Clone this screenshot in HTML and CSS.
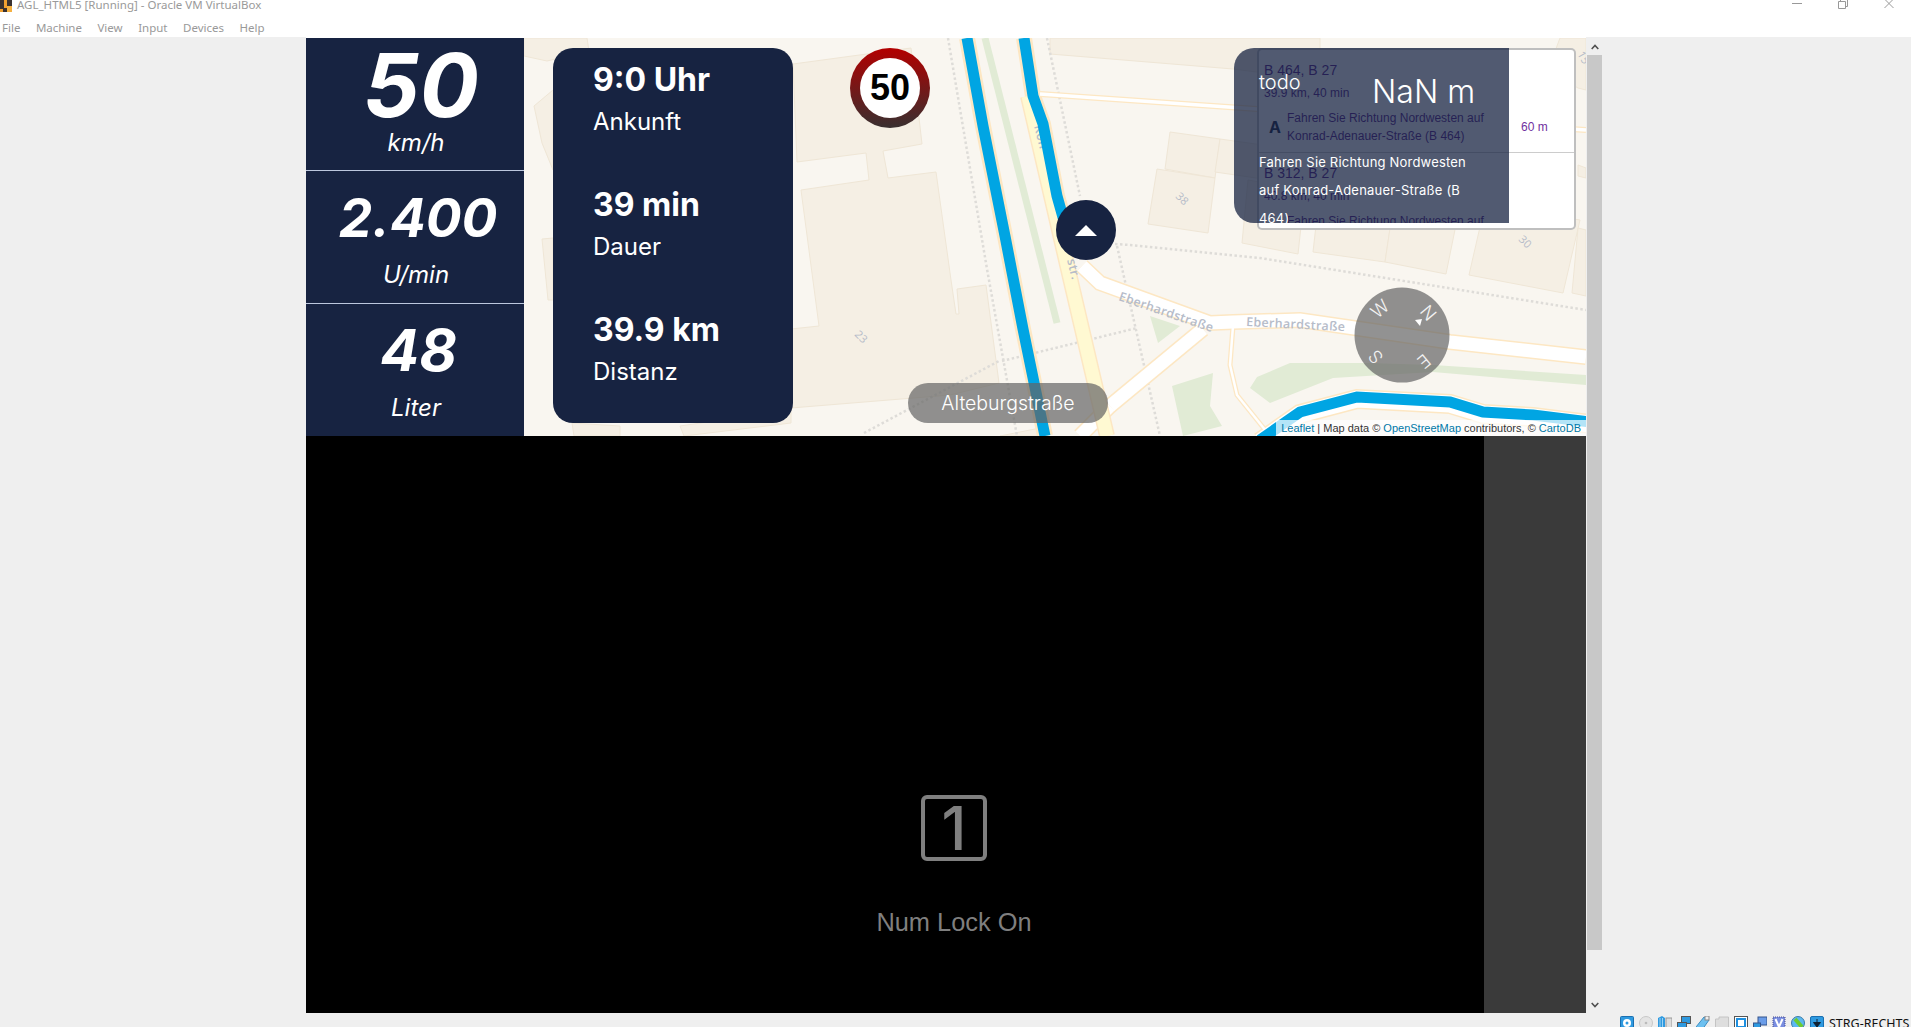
FILE: index.html
```html
<!DOCTYPE html>
<html lang="de">
<head>
<meta charset="utf-8">
<title>AGL_HTML5 [Running] - Oracle VM VirtualBox</title>
<link rel="stylesheet" href="styles.css">
</head>
<body>
<header class="chrome">
  <div class="titlebar">
    <svg class="app-icon" viewBox="0 0 12 12"><rect x="0" y="0" width="12" height="12" fill="#3a3230"/><rect x="4" y="0" width="3" height="8" fill="#f0a030"/><rect x="7" y="6" width="5" height="6" fill="#f5b040"/><rect x="0" y="9" width="3" height="3" fill="#f0a030"/></svg>
    <span class="window-title">AGL_HTML5 [Running] - Oracle VM VirtualBox</span>
    <div class="window-controls">
      <svg class="win-icon" viewBox="0 0 10 10"><path d="M0 4.5H10" stroke="#999" fill="none"/></svg>
      <svg class="win-icon" viewBox="0 0 10 10"><path d="M.5 2.5H7.5V9.5H.5ZM2.5 2.5V.5H9.5V7.5H7.5" stroke="#999" fill="none"/></svg>
      <svg class="win-icon" viewBox="0 0 10 10"><path d="M.5 0L9.5 9M9.5 0L.5 9" stroke="#999" fill="none"/></svg>
    </div>
  </div>
  <nav class="menubar">
    <span class="menu-item">File</span><span class="menu-item">Machine</span><span class="menu-item">View</span><span class="menu-item">Input</span><span class="menu-item">Devices</span><span class="menu-item">Help</span>
  </nav>
</header>

<div class="workspace">
  <main class="vm">
    <section class="top-row">
      <aside class="stats">
        <div class="stat stat-speed"><div class="stat-value">50</div><div class="stat-unit">km/h</div></div>
        <div class="stat stat-rpm"><div class="stat-value">2.400</div><div class="stat-unit">U/min</div></div>
        <div class="stat stat-fuel"><div class="stat-value">48</div><div class="stat-unit">Liter</div></div>
      </aside>

      <div class="map">
        <svg class="map-canvas" viewBox="524 38 1062 398" preserveAspectRatio="none">
          <g class="building">
            <polygon points="801,190 869,180 866,153 797,162 793,64 911,48 922,144 883,151 888,178 936,172 951,280 956,314 959,314 957,289 986,285 999,383 950,395 791,408 791,329 819,326"/>
            <polygon points="524,38 587,38 589,51 547,61 524,56"/>
            <polygon points="534,106 553,90 553,170 542,143"/>
            <polygon points="542,239 553,238 553,300 548,300"/>
            <polygon points="572,423 620,426 620,436 574,436"/>
            <polygon points="680,426 791,410 791,423 684,436"/>
            <polygon points="1050,38 1050,54 1233,69 1320,80 1320,38"/>
            <polygon points="1170,132 1220,139 1215,178 1165,169"/>
            <polygon points="1220,139 1270,146 1270,180 1215,172"/>
            <polygon points="1157,169 1215,178 1208,233 1148,224"/>
            <polygon points="1248,180 1305,190 1298,254 1242,243"/>
            <polygon points="1320,190 1395,195 1385,262 1313,252"/>
            <polygon points="1395,195 1460,205 1446,274 1385,262"/>
            <polygon points="1485,205 1580,220 1563,293 1469,275"/>
            <polygon points="1578,228 1586,230 1586,296 1572,293"/>
            <polygon points="1560,38 1586,38 1586,90 1578,88 1548,70"/>
            <polygon points="1578,165 1586,168 1586,178 1578,176"/>
            <polygon points="1000,436 1040,428 1042,436"/>
          </g>
          <g class="park">
            <polygon points="1250,388 1257,377 1290,363 1367,363 1433,365 1586,375 1586,385 1433,372 1333,378 1270,403"/>
            <polygon points="1150,316 1180,326 1158,343"/>
            <polygon points="1172,386 1213,373 1210,406 1222,426 1183,436"/>
          </g>
          <path class="green-strip" d="M985 38L1057 323"/>
          <g class="paths">
            <path d="M948 38L987 269L1017 436"/>
            <path d="M1047 38L1080 196"/>
            <path d="M1115 244L1130 245L1260 258L1586 310"/>
            <path d="M1117 246L1160 436"/>
            <path d="M1002 361L1137 328"/>
            <path d="M864 433L999 361"/>
          </g>
          <g class="road-casing">
            <path class="w16" d="M1082 266L1100 283L1210 323L1233 322L1300 320L1450 342L1586 357"/>
            <path class="w16" d="M1110 406L1203 329"/>
            <path class="w16" d="M1080 436L1110 406"/>
            <path class="w7" d="M1040 94L1257 109L1586 130"/>
            <path class="w6" d="M1233 326L1230 365L1237 395L1270 436"/>
            <path class="w16" d="M967 38L983 126L1005 236L1023 329L1045 436"/>
            <path class="w16" d="M1024 38L1033 96L1043 124L1057 196L1066 228"/>
            <path class="w20" d="M1260 442L1300 414L1357 399L1450 404L1483 414L1533 417L1590 424"/>
          </g>
          <g class="road-white">
            <path class="w14" d="M1082 266L1100 283L1210 323L1233 322L1300 320L1450 342L1586 357"/>
            <path class="w14" d="M1110 406L1203 329"/>
            <path class="w14" d="M1080 436L1110 406"/>
            <path class="w4" d="M1040 94L1257 109L1586 130"/>
            <path class="w3" d="M1233 326L1230 365L1237 395L1270 436"/>
            <path class="w17" d="M1260 442L1300 414L1357 399L1450 404L1483 414L1533 417L1590 424"/>
          </g>
          <path class="road-major-casing" d="M1028 96L1068 269L1107 436"/>
          <path class="road-major" d="M1028 96L1068 269L1107 436"/>
          <g class="map-labels">
            <text transform="translate(1118 300) rotate(19)">Eberhardstraße</text>
            <text transform="translate(1246 326) rotate(3)">Eberhardstraße</text>
            <text transform="translate(1034 126) rotate(76)">Kon</text>
            <text transform="translate(1067 260) rotate(76)">str.</text>
          </g>
          <g class="route">
            <path d="M967 38L983 126L1005 236L1023 329L1045 436"/>
            <path d="M1024 38L1033 96L1043 124L1057 196L1066 228"/>
            <path d="M1260 440L1300 412L1357 397L1450 402L1483 412L1533 415L1590 422"/>
          </g>
          <g class="map-numbers">
            <text transform="translate(854 335) rotate(45)">23</text>
            <text transform="translate(1175 197) rotate(45)">38</text>
            <text transform="translate(1518 240) rotate(45)">30</text>
            <text transform="translate(1577 54) rotate(60)">15</text>
          </g>
        </svg>

        <div class="trip-card">
          <div class="trip-item"><div class="trip-value">9:0 Uhr</div><div class="trip-label">Ankunft</div></div>
          <div class="trip-item"><div class="trip-value">39 min</div><div class="trip-label">Dauer</div></div>
          <div class="trip-item"><div class="trip-value">39.9 km</div><div class="trip-label">Distanz</div></div>
        </div>

        <div class="speed-sign"><div class="speed-sign-face">50</div></div>

        <div class="car-marker"><svg class="car-arrow" viewBox="0 0 22 12"><path d="M11 0L22 11H0Z" fill="#fff"/></svg></div>

        <div class="street-pill">Alteburgstraße</div>

        <div class="routing-box">
          <div class="routing-list">
            <div class="alt">
              <div class="alt-title">B 464, B 27</div>
              <div class="alt-sub">39.9 km, 40 min</div>
              <div class="alt-row"><span class="alt-icon">A</span><span class="alt-text">Fahren Sie Richtung Nordwesten auf<br>Konrad-Adenauer-Straße (B 464)</span><span class="alt-dist">60 m</span></div>
            </div>
            <div class="alt">
              <div class="alt-title">B 312, B 27</div>
              <div class="alt-sub">40.8 km, 40 min</div>
              <div class="alt-row"><span class="alt-icon"></span><span class="alt-text">Fahren Sie Richtung Nordwesten auf</span></div>
            </div>
          </div>
        </div>

        <div class="turn-card">
          <div class="turn-head"><span class="turn-todo">todo</span><span class="turn-dist">NaN m</span></div>
          <div class="turn-text">Fahren Sie Richtung Nordwesten auf Konrad-Adenauer-Straße (B 464)</div>
        </div>

        <svg class="compass" viewBox="0 0 96 96">
          <circle class="compass-disc" cx="48" cy="48" r="47.5"/>
          <g transform="rotate(50 48 48)">
            <g class="compass-letters">
              <text x="48" y="20">N</text>
              <text x="48" y="20" transform="rotate(90 48 48)">E</text>
              <text x="48" y="20" transform="rotate(180 48 48)">S</text>
              <text x="48" y="20" transform="rotate(270 48 48)">W</text>
            </g>
          </g>
          <polygon class="compass-needle" points="61,33 68,32 66,39"/>
        </svg>

        <div class="attribution"><a class="attr-link">Leaflet</a> | Map data © <a class="attr-link">OpenStreetMap</a> contributors, © <a class="attr-link">CartoDB</a></div>
      </div>
    </section>

    <section class="bottom-row">
      <div class="keyboard-view">
        <div class="numlock-icon">1</div>
        <div class="numlock-label">Num Lock On</div>
      </div>
      <div class="side-panel"></div>
    </section>
  </main>

  <div class="scrollbar">
    <svg class="scroll-arrow" viewBox="0 0 8 6"><path d="M.7 5L4 1.5L7.3 5" stroke="#505050" stroke-width="1.6" fill="none"/></svg>
    <div class="scroll-thumb"></div>
    <svg class="scroll-arrow scroll-arrow-down" viewBox="0 0 8 6"><path d="M.7 1L4 4.5L7.3 1" stroke="#505050" stroke-width="1.6" fill="none"/></svg>
  </div>
</div>

<footer class="statusbar">
  <svg class="st-icon" viewBox="0 0 14 14"><rect x=".5" y=".5" width="13" height="13" rx="1" fill="#2f9ae0" stroke="#1a6fb0"/><circle cx="7" cy="7" r="4" fill="#fff"/><circle cx="7" cy="7" r="1.5" fill="#2f9ae0"/></svg>
  <svg class="st-icon" viewBox="0 0 14 14"><circle cx="7" cy="7" r="6.5" fill="#e4e4e4" stroke="#c8c8c8"/><circle cx="7" cy="7" r="1.3" fill="#bbb"/></svg>
  <svg class="st-icon" viewBox="0 0 14 14"><path d="M0 2L4 0L7 2V14H0Z" fill="#2f9ae0"/><path d="M2 2V13M4.500 2V13" stroke="#9bd3f5"/><rect x="8" y="2" width="6" height="10" fill="#ddd" stroke="#999"/></svg>
  <svg class="st-icon" viewBox="0 0 14 14"><rect x="4.500" y=".5" width="9" height="7" fill="#2f9ae0" stroke="#555"/><rect x=".5" y="6.500" width="9" height="7" fill="#2f9ae0" stroke="#555"/></svg>
  <svg class="st-icon" viewBox="0 0 14 14"><path d="M0 11L8 1L13 4L6 14H2Z" fill="#6cc0f0" stroke="#3c8cc0"/><rect x="9" y="0" width="4" height="4" fill="#eee" stroke="#888"/></svg>
  <svg class="st-icon" viewBox="0 0 14 14"><path d="M.5 3H4V1H13.500V13.500H.5Z" fill="#dedede" stroke="#c4c4c4"/></svg>
  <svg class="st-icon" viewBox="0 0 14 14"><rect x=".5" y=".5" width="13" height="13" fill="#fff" stroke="#555"/><rect x="2" y="2" width="10" height="10" fill="#1e90e0"/><rect x="4" y="4" width="6" height="6" fill="#fff"/></svg>
  <svg class="st-icon" viewBox="0 0 14 14"><rect x="5" y="1" width="9" height="8" fill="#6a9ce8" stroke="#34558c"/><rect x=".5" y="7" width="7" height="7" fill="#2f9ae0" stroke="#34558c"/></svg>
  <svg class="st-icon" viewBox="0 0 14 14"><rect x="1" y="1" width="12" height="12" fill="#7a8ee0" stroke="#4a4f90" stroke-dasharray="1 1"/><path d="M3.500 3L7 11L10.500 3" stroke="#fff" stroke-width="2" fill="none"/></svg>
  <svg class="st-icon" viewBox="0 0 14 14"><circle cx="7" cy="7" r="6.500" fill="#5cb8f0" stroke="#3c7ca8"/><path d="M4 3L11 11" stroke="#6dcc30" stroke-width="4"/></svg>
  <svg class="st-icon" viewBox="0 0 14 14"><rect x=".5" y=".5" width="13" height="13" rx="1.500" fill="#2f9ae0" stroke="#1a6fb0"/><path d="M7 3V7M3.500 6.500H10.500L7 11Z" stroke="#123" fill="#123"/></svg>
  <span class="host-key">STRG-RECHTS</span>
</footer>
</body>
</html>
```

FILE: styles.css
```css
* { box-sizing: border-box; }
html, body { margin: 0; height: 1027px; overflow: hidden; }
body {
  width: 1911px;
  background: #efefef;
  font-family: "Inter", "Liberation Sans", sans-serif;
  display: flex;
  flex-direction: column;
}

/* window chrome */
.chrome { height: 37px; background: #fff; flex: none; overflow: hidden; }
.titlebar { height: 18px; display: flex; align-items: flex-start; position: relative; }
.app-icon { width: 12px; height: 12px; flex: none; display: block; }
.window-title { margin-left: 5px; margin-top: -3px; font: 11.5px/16px "Noto Sans", sans-serif; color: #9a9a9a; }
.window-controls { margin-left: auto; display: flex; gap: 36px; padding-right: 17px; align-items: flex-start; }
.win-icon { width: 10px; height: 10px; display: block; margin-top: -1px; }
.menubar { height: 19px; display: flex; padding-left: 2px; font: 11.5px/20px "Noto Sans", sans-serif; color: #999; }
.menu-item { margin-right: 15.5px; }

/* workspace */
.workspace { height: 976px; flex: none; display: flex; padding-left: 306px; }
.vm { width: 1280px; height: 976px; display: flex; flex-direction: column; background: #fff; padding-top: 1px; }
.top-row { height: 398px; display: flex; flex: none; }

/* stats */
.stats { width: 218px; flex: none; background: #172341; color: #fff; display: flex; flex-direction: column; }
.stat { display: flex; flex-direction: column; align-items: center; height: 133px; border-bottom: 1px solid #bcc7de; font-style: italic; }
.stat-fuel { height: 132px; border-bottom: 0; }
.stat-value { font-weight: 700; }
.stat-unit { font-size: 24px; line-height: 30px; padding-left: 2px; }
.stat-speed .stat-value { font-size: 88px; line-height: 88px; margin-top: 3px; margin-bottom: -1px; padding-left: 12px; }
.stat-rpm .stat-value { font-size: 53px; line-height: 53px; margin-top: 20.500px; margin-bottom: 15.500px; padding-left: 6px; }
.stat-fuel .stat-value { font-size: 58px; line-height: 58px; margin-top: 17px; margin-bottom: 14px; padding-left: 7px; }

/* map */
.map { flex: 1; position: relative; overflow: hidden; background: #f9f6f0; }
.map-canvas { display: block; width: 100%; height: 100%; }
.building polygon { fill: #f5efe4; stroke: #efe6d6; stroke-width: 1; }
.park polygon { fill: #e1ebd5; }
.green-strip { fill: none; stroke: #e1ebd5; stroke-width: 7; }
.paths path { fill: none; stroke: #dedcd8; stroke-width: 2.500; stroke-dasharray: 2.500 2.500; }
.road-casing path { fill: none; stroke: #fde7c3; }
.road-white path { fill: none; stroke: #fff; }
.w20 { stroke-width: 20; }
.w17 { stroke-width: 17; }
.w16 { stroke-width: 16; }
.w14 { stroke-width: 13; }
.w7 { stroke-width: 6; }
.w6 { stroke-width: 5; }
.w4 { stroke-width: 3.5; }
.w3 { stroke-width: 2.5; }
.road-major-casing { fill: none; stroke: #fde7c3; stroke-width: 16; }
.road-major { fill: none; stroke: #fff9d2; stroke-width: 13; }
.route path { fill: none; stroke: #00a5e3; stroke-width: 11; }
.map-labels text { font: 600 12.500px "Open Sans", sans-serif; letter-spacing: .3px; fill: #b6bcc9; }
.map-numbers text { font: 11px "Open Sans", sans-serif; fill: #b6bcc9; }

/* overlays */
.trip-card { position: absolute; left: 29px; top: 9.500px; width: 240px; height: 375px; border-radius: 20px; background: #172341; color: #fff; padding: 12px 0 0 40px; display: flex; flex-direction: column; gap: 41px; }
.trip-value { font-size: 32px; line-height: 40px; font-weight: 700; }
.trip-label { font-size: 24px; line-height: 44px; }

.speed-sign { position: absolute; left: 326px; top: 10px; width: 80px; height: 80px; border-radius: 50%; background: linear-gradient(#b30000, #383030); display: flex; align-items: center; justify-content: center; }
.speed-sign-face { width: 60px; height: 60px; border-radius: 50%; background: #fff; color: #000; font: 700 36px/60px "Liberation Sans", sans-serif; text-align: center; }

.car-marker { position: absolute; left: 532px; top: 162px; width: 60px; height: 60px; border-radius: 50%; background: #172341; display: flex; align-items: center; justify-content: center; }
.car-arrow { width: 22px; height: 12px; display: block; margin-top: 1px; }

.street-pill { position: absolute; left: 384px; top: 345px; width: 200px; height: 40px; border-radius: 20px; background: rgba(100, 100, 100, .7); color: #fff; font-size: 19.500px; font-weight: 300; line-height: 41px; text-align: center; }

.routing-box { position: absolute; left: 733px; top: 10px; width: 319px; height: 182px; background: #fff; border: 2px solid rgba(0, 0, 0, .25); border-radius: 5px; font-family: "Liberation Sans", sans-serif; color: #551a8b; }
.routing-list { height: 173px; overflow: hidden; }
.alt { padding-left: 5px; padding-top: 10px; height: 103px; border-bottom: 1px solid #ccc; }
.alt + .alt { border-bottom: 0; }
.alt-title { font-size: 14px; line-height: 20px; }
.alt-sub { font-size: 12px; line-height: 26px; }
.alt-row { display: flex; align-items: center; margin-top: 3px; font-size: 12px; line-height: 18px; }
.alt-icon { width: 23px; flex: none; padding-left: 5px; font: 700 16px "Inter", sans-serif; color: #172341; }
.alt-text { width: 234px; flex: none; }
.alt-dist { color: #7030a0; }

.turn-card { position: absolute; left: 710px; top: 10px; width: 275px; height: 175px; border-radius: 20px 0 0 20px; background: rgba(23, 35, 65, .75); color: #fff; padding-left: 25px; overflow: hidden; }
.turn-head { display: flex; align-items: flex-start; padding-top: 19px; height: 100px; font-weight: 300; }
.turn-todo { font-size: 20px; line-height: 30px; width: 113px; }
.turn-dist { font-size: 32px; line-height: 50px; }
.turn-text { font-size: 13px; letter-spacing: .2px; line-height: 28px; width: 224px; }

.compass { position: absolute; left: 830px; top: 249px; width: 96px; height: 96px; display: block; }
.compass-disc { fill: rgba(100, 100, 100, .7); }
.compass-letters text { font: 300 18px "Inter", sans-serif; fill: #f2f2f2; text-anchor: middle; }
.compass-needle { fill: #fff; }

.attribution { position: absolute; right: 0; bottom: 0; height: 16px; padding: 0 5px; background: rgba(255, 255, 255, .7); font: 11px/16px "Liberation Sans", sans-serif; color: #333; white-space: nowrap; }
.attr-link { color: #0078a8; }

/* lower part */
.bottom-row { flex: 1; display: flex; min-height: 0; }
.keyboard-view { width: 1178px; background: #000; color: #7f7f7f; display: flex; flex-direction: column; align-items: center; padding: 359px 0 0 118px; }
.numlock-icon { width: 66px; height: 66px; border: 4px solid #7f7f7f; border-radius: 6px; font: 500 60px/58px "Inter", sans-serif; text-align: center; }
.numlock-label { margin-top: 45px; font: 25.400px/32px "Liberation Sans", sans-serif; }
.side-panel { flex: 1; background: #3a3a3a; }

/* scrollbar */
.scrollbar { width: 15px; margin-left: 1px; display: flex; flex-direction: column; align-items: center; }
.scroll-arrow { width: 8px; height: 6px; display: block; margin-top: 7px; flex: none; }
.scroll-thumb { width: 15px; height: 895px; margin-top: 5px; background: #c8c8c8; flex: none; }
.scroll-arrow-down { margin-top: 52px; }

/* status bar */
.statusbar { height: 14px; flex: none; display: flex; align-items: flex-start; padding: 3px 0 0 1620px; gap: 5px; overflow: hidden; }
.st-icon { width: 14px; height: 14px; flex: none; display: block; }
.host-key { font: 12.500px/14px "Noto Sans", sans-serif; color: #111; padding-top: 1px; white-space: nowrap; }
```
